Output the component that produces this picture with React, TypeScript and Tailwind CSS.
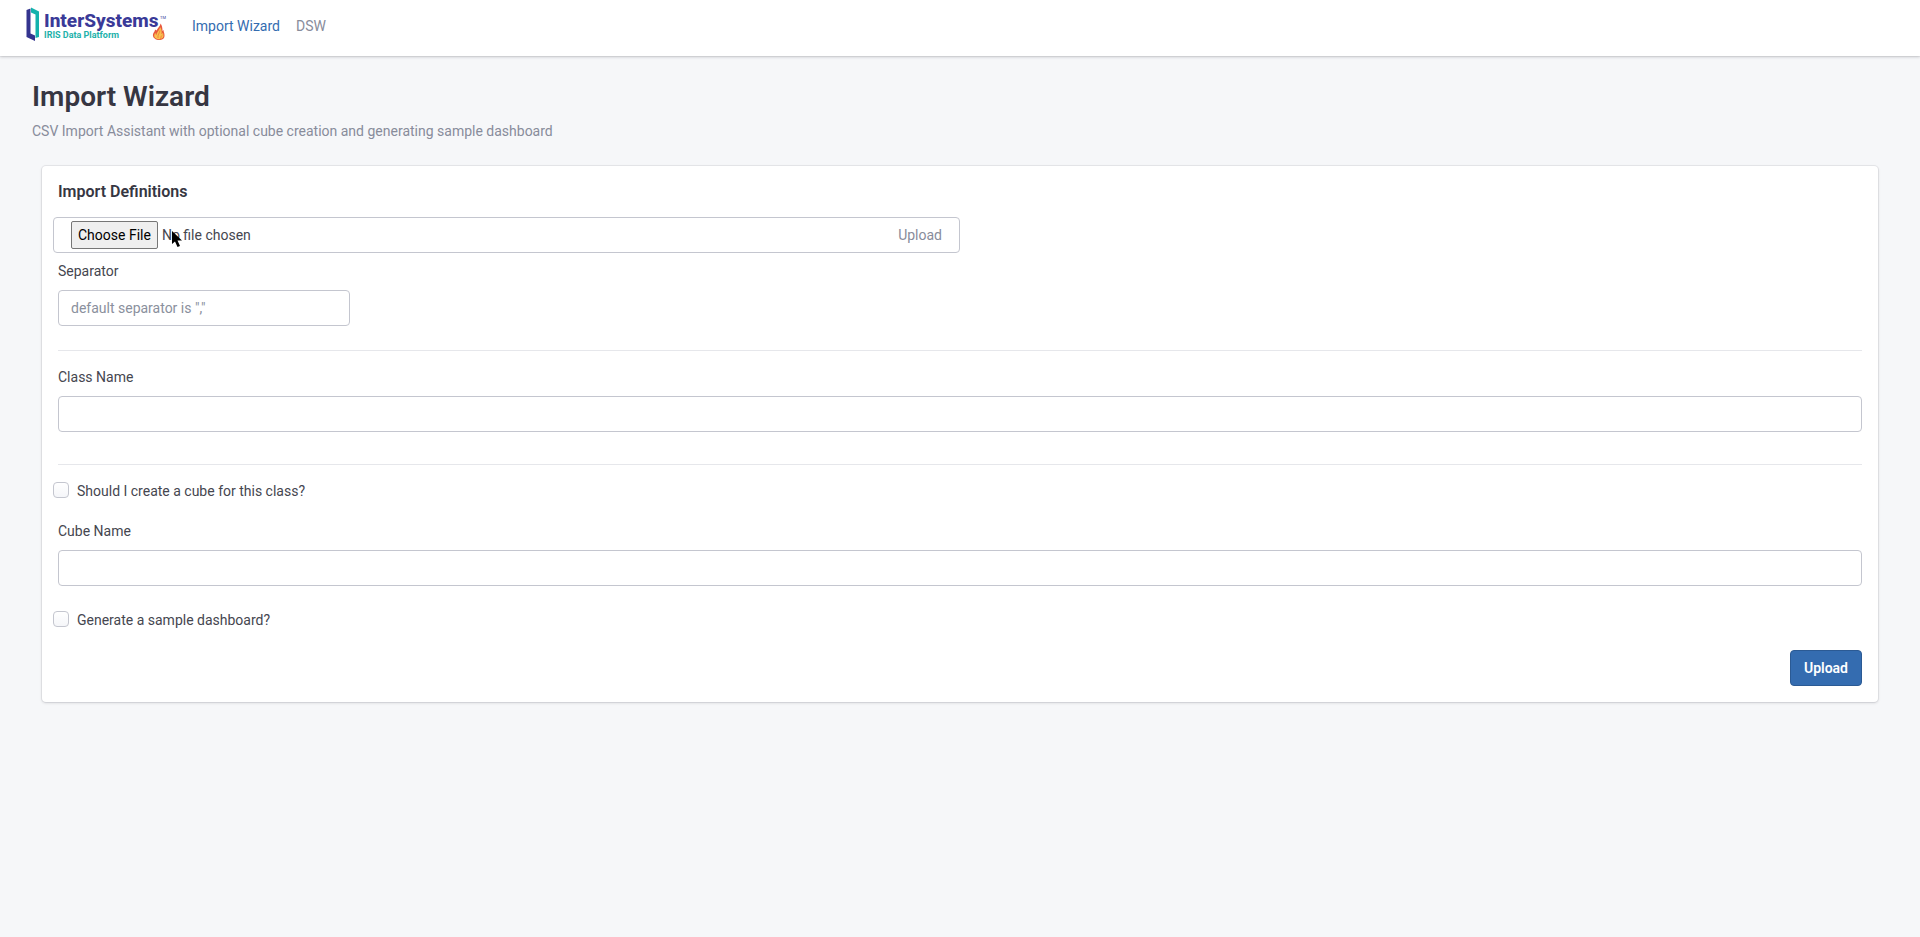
import { useState } from 'react';
import type { ReactElement, ReactNode } from 'react';
import { clsx } from 'clsx';

interface NavItem {
  href: string;
  label: string;
}

const NAV_ITEMS: NavItem[] = [
  { href: '#import', label: 'Import Wizard' },
  { href: '#dsw', label: 'DSW' },
];

function Logo(): ReactElement {
  return (
    <svg width="144" height="40" viewBox="0 0 144 40" role="img" aria-label="InterSystems IRIS Data Platform">
      {/* Open door mark */}
      <path d="M5 3.500 L13 7.500 V33 L9.500 34 V10.500 L5 8.500 Z" fill="#14b2ac" />
      <path d="M0.500 6 L4.500 4.500 V29.500 L9 31.500 V37 L0.500 33 Z" fill="#34348f" />
      <text x="18" y="23" fill="#3a3a98" className="font-['Roboto'] text-[19px] font-extrabold">
        InterSystems
      </text>
      <text x="18" y="34" fill="#1db1aa" className="font-['Roboto'] text-[9px] font-bold">
        IRIS Data Platform
      </text>
      <text x="134" y="15" fill="#3a3a98" className="font-['Roboto'] text-[4px]">
        TM
      </text>
      {/* Flame */}
      <path
        d="M134.500 19.500 C134.500 22 132 23.500 130.500 26.500 C130 26 129.500 26 129 25.500 C129 28 126.500 29 127 32 C127.500 34.500 130.500 36 133 36 C136 36 138.500 35 138.500 31.500 C138.500 29 137.500 28 137.500 26 C137 26.500 136.500 27 136.500 27 C136.500 23.500 136 21.500 134.500 19.500 Z"
        fill="#e8573c"
      />
      <path
        d="M134 23 C134 26 130.500 28 130.500 31 C129.500 30.500 129.500 29.500 129.500 28.500 C128 30.500 127.500 33 130 34.500 C133 36 137.500 35 137.500 32 C137.500 30.500 137 29.500 137 28.500 C136.500 29.500 135.500 30 135.500 30 C136 27 135.500 25 134 23 Z"
        fill="#f9c04f"
      />
      <path d="M134 26.500 C133.500 29.500 131.500 30.500 132 34 M136.500 31 C135 32 135 33 134.500 35" stroke="#ef7a35" strokeWidth="0.800" fill="none" />
    </svg>
  );
}

interface FieldProps {
  id: string;
  label: string;
  placeholder?: string;
  className?: string;
}

function Field({ id, label, placeholder, className }: FieldProps): ReactElement {
  return (
    <div className={className}>
      <label htmlFor={id} className="mb-2 block">
        {label}
      </label>
      <input
        id={id}
        type="text"
        placeholder={placeholder}
        className="block h-9 w-full rounded border border-[#c4c6cf] bg-white px-3 placeholder:text-[#8a909d]"
      />
    </div>
  );
}

interface CheckProps {
  id: string;
  children: ReactNode;
}

function Check({ id, children }: CheckProps): ReactElement {
  const [checked, setChecked] = useState(false);
  return (
    <div className="-ml-[5px] flex items-start gap-2">
      <input
        id={id}
        type="checkbox"
        checked={checked}
        onChange={(e) => setChecked(e.target.checked)}
        className="mt-px size-4 appearance-none rounded border border-[#c4c6cf] bg-linear-to-b from-white to-[#f5f6f9] checked:bg-[#346cb0]"
      />
      <label htmlFor={id}>{children}</label>
    </div>
  );
}

export default function App(): ReactElement {
  return (
    <div className="min-h-screen bg-[#f6f7f9] font-['Roboto',sans-serif] text-sm leading-[21px] text-[#45464f]">
      <header className="flex h-14 items-start gap-[22px] bg-white px-[26px] pt-1 shadow-[0_0_0_1px_rgba(20,20,31,0.05),0_1px_3px_rgba(20,20,31,0.2)]">
        <a href="#import">
          <Logo />
        </a>
        <nav className="flex gap-4 pt-3" aria-label="Main">
          {NAV_ITEMS.map((item, i) => (
            <a key={item.href} href={item.href} className={clsx(i === 0 ? 'text-[#346cb0]' : 'text-[#888c9b]')}>
              {item.label}
            </a>
          ))}
        </nav>
      </header>

      <main className="px-8 pt-[25px]">
        <h1 className="text-[28px] leading-8 font-semibold text-[#363642]">Import Wizard</h1>
        <p className="mt-2 text-[#888c9b]">CSV Import Assistant with optional cube creation and generating sample dashboard</p>

        <form
          className="mx-[10px] mt-6 rounded bg-white p-4 shadow-[0_0_0_1px_rgba(20,20,31,0.06),0_1px_3px_rgba(20,20,31,0.15)]"
          onSubmit={(e) => e.preventDefault()}
        >
          <h2 className="text-base leading-5 font-semibold text-[#363642]">Import Definitions</h2>

          <div className="relative mt-[15px] -ml-[5px] flex h-9 w-[calc(50%+5px)] items-center justify-between rounded border border-[#c4c6cf] px-[17px]">
            <input
              type="file"
              aria-label="Import file"
              className="min-w-0 flex-1 file:h-7 file:rounded-[2px] file:border file:border-[#767676] file:bg-[#efefef] file:px-[6px] file:text-black"
            />
            <span className="text-[#888c9b]">Upload</span>
            <svg className="absolute top-3 left-[117px]" width="12" height="18" viewBox="0 0 12 18" aria-hidden="true">
              <path d="M1 1 V14 L4 11.500 L6.500 17 L9 16 L6.500 10.500 H11 Z" fill="#000" />
            </svg>
          </div>

          <Field id="separator" label="Separator" placeholder={'default separator is ","'} className="mt-2 w-[292px]" />
          <hr className="mt-6 mb-4 border-[#e6e7eb]" />
          <Field id="class-name" label="Class Name" />
          <hr className="mt-8 mb-4 border-[#e6e7eb]" />
          <Check id="create-cube">Should I create a cube for this class?</Check>
          <Field id="cube-name" label="Cube Name" className="mt-[19px]" />
          <div className="mt-6">
            <Check id="sample-dashboard">Generate a sample dashboard?</Check>
          </div>

          <div className="mt-[19px] flex justify-end">
            <button
              type="submit"
              className="h-9 rounded border border-[#2b5a94] bg-[#346cb0] px-[13px] font-semibold text-white"
            >
              Upload
            </button>
          </div>
        </form>
      </main>
    </div>
  );
}
